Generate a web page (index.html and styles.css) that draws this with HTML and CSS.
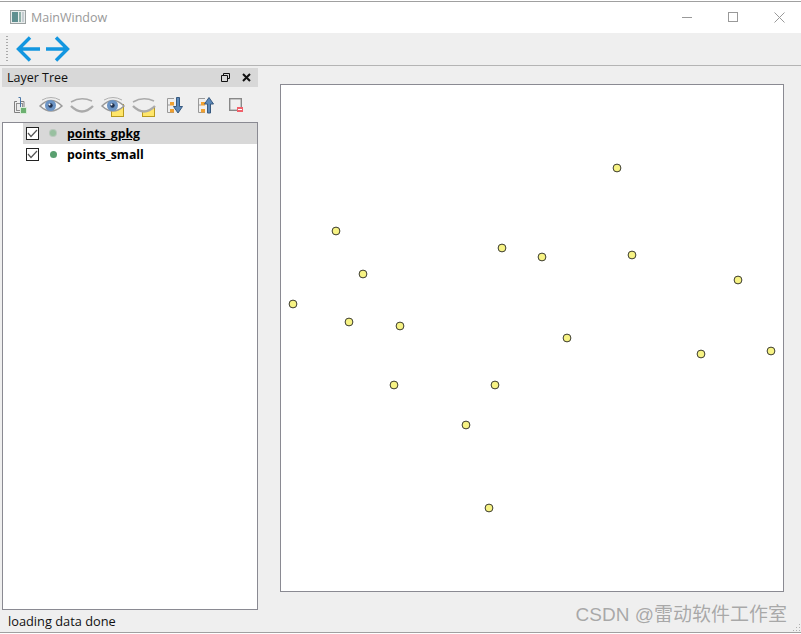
FILE: index.html
```html
<!DOCTYPE html>
<html lang="en">
<head>
    <meta charset="UTF-8">
    <title>MainWindow</title>
    <link rel="stylesheet" href="styles.css">
</head>
<body>
<div class="window">
    <div class="titlebar">
        <svg class="app-icon" width="16" height="14" viewBox="0 0 16 14">
            <rect x="0.5" y="0.5" width="15" height="13" fill="#e8ecec" stroke="#9aa0a0"/>
            <rect x="2" y="2" width="6" height="10" fill="#5f8f90"/>
            <rect x="9" y="2" width="2" height="10" fill="#8fb0a8"/>
            <rect x="12" y="2" width="2" height="10" fill="#c4ccd0"/>
        </svg>
        <span class="title-text">MainWindow</span>
        <div class="win-buttons">
            <svg width="11" height="11" viewBox="0 0 11 11"><path d="M0 5.5H10" stroke="#999" fill="none"/></svg>
            <svg width="11" height="11" viewBox="0 0 11 11"><rect x="0.5" y="0.5" width="9" height="9" stroke="#999" fill="none"/></svg>
            <svg width="11" height="11" viewBox="0 0 11 11"><path d="M0.5 0.5L10.5 10.5M10.5 0.5L0.5 10.5" stroke="#999" fill="none"/></svg>
        </div>
    </div>

    <div class="toolbar">
        <div class="grip"></div>
        <svg width="24" height="26" viewBox="0 0 24 26"><path d="M24 13H2M14 1.5L2.5 13L14 24.5" stroke="#1296e0" stroke-width="3.4" fill="none"/></svg>
        <svg width="24" height="26" viewBox="0 0 24 26"><path d="M0 13H22M10 1.5L21.5 13L10 24.5" stroke="#1296e0" stroke-width="3.4" fill="none"/></svg>
    </div>

    <div class="main">
        <div class="dock">
            <div class="dock-title">
                <span class="dock-name">Layer Tree</span>
                <svg width="9" height="9" viewBox="0 0 9 9"><path d="M2.5 2.5V0.5H8.5V5.5H6.5M0.5 2.5H6.5V8.5H0.5Z" fill="none" stroke="#111"/></svg>
                <svg width="9" height="9" viewBox="0 0 9 9"><path d="M1 1L8 8M8 1L1 8" fill="none" stroke="#111" stroke-width="2"/></svg>
            </div>

            <div class="dock-tools">
                <svg class="tool-add" width="16" height="24" viewBox="0 0 16 24">
                    <path d="M2.5 8.5H5M9 8.5H12V14M2.5 8.5V19.5H9" fill="none" stroke="#808080"/>
                    <rect x="4.5" y="10.5" width="6" height="7" fill="#ececec" stroke="#909090"/>
                    <path d="M6.5 4.5H8.5V14" fill="none" stroke="#4a78a8"/>
                    <rect x="8.5" y="14.5" width="6" height="6" fill="#6cb070" stroke="#d8ecd8"/>
                </svg>
                <svg width="24" height="24" viewBox="0 0 24 24">
                    <path d="M1 13Q12 2 23 13Q12 23 1 13Z" fill="#f8f8f8" stroke="#999" stroke-width="1.5"/>
                    <path d="M3 7Q12 2 21 7" fill="none" stroke="#b0b0b0"/>
                    <circle cx="11.5" cy="12.5" r="5.5" fill="#6c94c4"/>
                    <circle cx="11.5" cy="12.5" r="2.2" fill="#20304c"/>
                    <circle cx="10.5" cy="11.5" r="1" fill="#fff"/>
                </svg>
                <svg width="24" height="24" viewBox="0 0 24 24">
                    <path d="M1 9Q11 3 22 8" fill="none" stroke="#aaa" stroke-width="1.5"/>
                    <path d="M1 13Q12 24 23 13" fill="none" stroke="#aaa" stroke-width="2.4"/>
                </svg>
                <svg width="24" height="24" viewBox="0 0 24 24">
                    <rect x="10.5" y="11.5" width="12" height="12" fill="#ffe66a" stroke="#b89a20"/>
                    <path d="M1 13Q12 2 23 13Q12 23 1 13Z" fill="#f8f8f8" stroke="#999" stroke-width="1.5"/>
                    <path d="M3 7Q12 2 21 7" fill="none" stroke="#b0b0b0"/>
                    <circle cx="11.5" cy="12.5" r="5.5" fill="#6c94c4"/>
                    <circle cx="11.5" cy="12.5" r="2.2" fill="#20304c"/>
                    <circle cx="10.5" cy="11.5" r="1" fill="#fff"/>
                </svg>
                <svg width="24" height="24" viewBox="0 0 24 24">
                    <rect x="10.5" y="11.5" width="12" height="12" fill="#ffe66a" stroke="#b89a20"/>
                    <path d="M1 9Q11 3 23 8V13Q12 24 1 13Z" fill="#efefef"/>
                    <path d="M1 9Q11 3 22 8" fill="none" stroke="#aaa" stroke-width="1.5"/>
                    <path d="M1 13Q12 24 23 13" fill="none" stroke="#aaa" stroke-width="2.4"/>
                </svg>
                <svg class="tool-down" width="17" height="24" viewBox="0 0 17 24">
                    <path d="M8 5.5H1.5V19.5H8M1.5 12H4" fill="none" stroke="#999"/>
                    <rect x="4" y="9" width="4" height="3.5" fill="#f0a030"/>
                    <rect x="4" y="16" width="4" height="3.5" fill="#f0a030"/>
                    <path d="M10.5 4.5H13.5V13.5H16.5L12 20L7.5 13.5H10.5Z" fill="#5c88b8" stroke="#37597f"/>
                </svg>
                <svg class="tool-up" width="17" height="24" viewBox="0 0 17 24">
                    <path d="M8 5.5H1.5V19.5H8M1.5 12H4" fill="none" stroke="#999"/>
                    <rect x="4" y="9" width="4" height="3.5" fill="#f0a030"/>
                    <rect x="4" y="16" width="4" height="3.5" fill="#f0a030"/>
                    <path d="M10.5 20H13.5V11H16.5L12 4.5L7.5 11H10.5Z" fill="#5c88b8" stroke="#37597f"/>
                </svg>
                <svg class="tool-up" width="16" height="24" viewBox="0 0 16 24">
                    <rect x="1.7" y="5.7" width="11.6" height="11.6" fill="none" stroke="#888" stroke-width="1.4"/>
                    <rect x="9" y="14" width="6" height="5" fill="#f0606a"/>
                    <path d="M10 16.5H14" stroke="#fff"/>
                </svg>
            </div>

            <div class="tree">
                <div class="tree-row selected">
                    <span class="check"><svg width="11" height="11" viewBox="0 0 11 11"><path d="M1 5L4 8.5L10 2" fill="none" stroke="#555" stroke-width="1.2"/></svg></span>
                    <span class="dot dot-faded"></span>
                    <span class="layer-name current">points_gpkg</span>
                </div>
                <div class="tree-row">
                    <span class="check"><svg width="11" height="11" viewBox="0 0 11 11"><path d="M1 5L4 8.5L10 2" fill="none" stroke="#555" stroke-width="1.2"/></svg></span>
                    <span class="dot"></span>
                    <span class="layer-name">points_small</span>
                </div>
            </div>
        </div>

        <div class="canvas">
            <svg class="points" width="504" height="508" viewBox="280 84 504 508" id="points"></svg>
        </div>
    </div>

    <div class="statusbar">loading data done</div>
    <div class="watermark">CSDN @雷动软件工作室</div>
    <div class="size-grip"></div>
</div>
<script>
    // Point positions in window coordinates
    const pts = [[617,168],[336,231],[502,248],[542,257],[632,255],[363,274],[738,280],[293,304],[349,322],
        [400,326],[567,338],[701,354],[771,351],[394,385],[495,385],[466,425],[489,508]];
    const svg = document.getElementById('points');
    svg.innerHTML = pts.map(p => `<circle cx="${p[0]}" cy="${p[1]}" r="3.9" fill="#f7f384" stroke="#3a3a30" stroke-width="1"/>`).join('');
</script>
</body>
</html>
```

FILE: styles.css
```css
html, body {
    margin: 0;
    padding: 0;
    height: 100%;
    overflow: hidden;
    background: #fff;
}
.window {
    position: relative;
    width: 801px;
    height: 632px;
    margin-top: 1px;
    box-sizing: border-box;
    border-top: 1px solid #a0a0a0;
    border-bottom: 1px solid #a0a0a0;
    display: flex;
    flex-direction: column;
    background: #efefef;
    font-family: "Open Sans", "Noto Sans", sans-serif;
    font-size: 13px;
    color: #111;
}
.titlebar {
    height: 31px;
    box-sizing: border-box;
    padding-bottom: 1px;
    background: #fff;
    display: flex;
    align-items: center;
    padding-left: 10px;
    flex: none;
}
.app-icon {
    margin-right: 5px;
}
.title-text {
    color: #999;
    font-size: 12.5px;
}
.win-buttons {
    margin-left: auto;
    display: flex;
    gap: 35px;
    padding-right: 16px;
}
.toolbar {
    height: 33px;
    flex: none;
    display: flex;
    align-items: center;
    gap: 6px;
    box-sizing: border-box;
    border-bottom: 1px solid #b4b4b4;
    padding-left: 6px;
}
.grip {
    width: 2px;
    height: 26px;
    margin-right: 2px;
    background: repeating-linear-gradient(to bottom, #aaa 0, #aaa 1px, transparent 1px, transparent 3px);
}
.main {
    flex: 1;
    display: flex;
    min-height: 0;
}
.dock {
    width: 256px;
    margin-left: 2px;
    flex: none;
    display: flex;
    flex-direction: column;
}
.dock-title {
    margin-top: 2px;
    height: 19px;
    flex: none;
    background: #d8d8d8;
    display: flex;
    align-items: center;
    gap: 12px;
    padding: 0 7px 0 5px;
}
.dock-name {
    margin-right: auto;
    font-size: 12.5px;
}
.dock-tools {
    height: 35px;
    flex: none;
    display: flex;
    align-items: center;
    gap: 7px;
    padding-left: 10px;
    box-sizing: border-box;
}
.tool-add {
    margin-right: 4px;
}
.tool-down {
    margin-left: 3px;
}
.tool-up {
    margin-left: 7px;
}
.tree {
    flex: 1;
    background: #fff;
    border: 1px solid #8a8a92;
    min-height: 0;
}
.tree-row {
    height: 21px;
    margin-left: 20px;
    display: flex;
    align-items: center;
    padding-left: 3px;
}
.tree-row.selected {
    background: #d8d8d8;
}
.check {
    width: 11px;
    height: 11px;
    border: 1px solid #222;
    background: #fff;
    display: flex;
}
.dot {
    width: 7px;
    height: 7px;
    border-radius: 50%;
    background: #5aa070;
    margin: 0 10px 1px 11px;
}
.dot-faded {
    width: 6px;
    height: 6px;
    margin-right: 11px;
    background: #98c0a0;
    box-shadow: 0 0 0 1px #b8c8bc;
}
.layer-name {
    font-weight: 700;
    font-size: 12.3px;
    color: #000;
}
.layer-name.current {
    text-decoration: underline;
}
.canvas {
    width: 504px;
    height: 508px;
    margin: 18px 0 0 22px;
    box-sizing: border-box;
    background: #fff;
    outline: 1px solid #8a8a92;
    outline-offset: -1px;
    flex: none;
}
.points {
    display: block;
}
.statusbar {
    height: 22px;
    flex: none;
    box-sizing: border-box;
    padding-left: 8px;
    line-height: 22px;
    font-size: 12.8px;
}
.watermark {
    position: absolute;
    right: 14px;
    bottom: 6px;
    font-family: "Liberation Sans", "Noto Sans CJK SC", sans-serif;
    font-size: 19px;
    color: rgba(120, 120, 120, 0.6);
    white-space: nowrap;
}
.size-grip {
    position: absolute;
    right: 1px;
    bottom: 1px;
    width: 8px;
    height: 8px;
    background-image: radial-gradient(#b0b0b0 1px, transparent 1px);
    background-size: 3px 3px;
    clip-path: polygon(100% 0, 100% 100%, 0 100%);
}
```
